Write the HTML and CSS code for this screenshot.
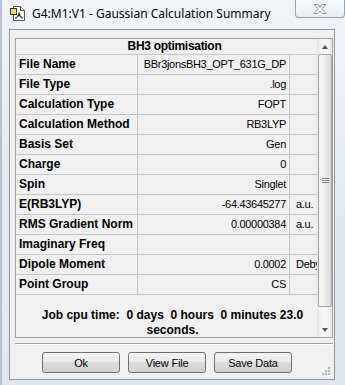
FILE: index.html
```html
<!DOCTYPE html>
<html lang="en">
<head>
    <meta charset="UTF-8">
    <title>Gaussian Calculation Summary</title>
    <link rel="stylesheet" href="styles.css">
</head>
<body>
    <div class="window">
        <div class="titlebar">
            <svg class="app-icon" width="17" height="17" viewBox="0 0 17 17">
                <path d="M3.5 1.5h7l4 4v10h-11z" fill="#fff" stroke="#555"/>
                <path d="M10.5 1.5v4h4" fill="#ddd" stroke="#555"/>
                <rect x="0.5" y="3.5" width="6" height="6" fill="#ffee00" stroke="#333"/>
                <path d="M9 7v3M9 10l-3 3M9 10l3 3" stroke="#444" stroke-width="1.2" fill="none"/>
                <circle cx="9" cy="10" r="1.3" fill="#222"/>
                <circle cx="6" cy="13" r="1.1" fill="#777"/>
                <circle cx="12" cy="13" r="1.1" fill="#777"/>
            </svg>
            <span class="title">G4:M1:V1 - Gaussian Calculation Summary</span>
            <div class="close">
                <svg width="14" height="10" viewBox="0 0 14 10">
                    <path d="M1 0.5h3.5l2.5 2.6 2.5-2.6h3.5l-4.2 4.5 4.2 4.5h-3.5l-2.5-2.6-2.5 2.6h-3.5l4.2-4.5z" fill="#fff" stroke="#8c96a2"/>
                </svg>
            </div>
        </div>

        <div class="client">
            <div class="grid">
                <div class="sheet">
                    <div class="caption">BH3 optimisation</div>
                    <div class="row"><div class="label">File Name</div><div class="value">BBr3jonsBH3_OPT_631G_DP</div><div class="unit"></div></div>
                    <div class="row"><div class="label">File Type</div><div class="value">.log</div><div class="unit"></div></div>
                    <div class="row"><div class="label">Calculation Type</div><div class="value">FOPT</div><div class="unit"></div></div>
                    <div class="row"><div class="label">Calculation Method</div><div class="value">RB3LYP</div><div class="unit"></div></div>
                    <div class="row"><div class="label">Basis Set</div><div class="value">Gen</div><div class="unit"></div></div>
                    <div class="row"><div class="label">Charge</div><div class="value">0</div><div class="unit"></div></div>
                    <div class="row"><div class="label">Spin</div><div class="value">Singlet</div><div class="unit"></div></div>
                    <div class="row"><div class="label">E(RB3LYP)</div><div class="value">-64.43645277</div><div class="unit">a.u.</div></div>
                    <div class="row"><div class="label">RMS Gradient Norm</div><div class="value">0.00000384</div><div class="unit">a.u.</div></div>
                    <div class="row"><div class="label">Imaginary Freq</div><div class="value"></div><div class="unit"></div></div>
                    <div class="row"><div class="label">Dipole Moment</div><div class="value">0.0002</div><div class="unit">Debye</div></div>
                    <div class="row"><div class="label">Point Group</div><div class="value">CS</div><div class="unit"></div></div>
                    <div class="cpu">Job cpu time:&nbsp; 0 days&nbsp; 0 hours&nbsp; 0 minutes 23.0 seconds.</div>
                </div>
                <div class="scrollbar">
                    <div class="arrow"><span class="tri-up"></span></div>
                    <div class="thumb"><span class="grip-lines"></span></div>
                    <div class="track"></div>
                    <div class="arrow"><span class="tri-down"></span></div>
                </div>
            </div>

            <div class="divider"></div>

            <div class="buttons">
                <button>Ok</button>
                <button>View File</button>
                <button>Save Data</button>
            </div>

            <svg class="size-grip" width="9" height="9" viewBox="0 0 9 9">
                <g fill="#b8b8b8">
                    <rect x="6" y="0" width="2" height="2"/>
                    <rect x="3" y="3" width="2" height="2"/>
                    <rect x="6" y="3" width="2" height="2"/>
                    <rect x="0" y="6" width="2" height="2"/>
                    <rect x="3" y="6" width="2" height="2"/>
                    <rect x="6" y="6" width="2" height="2"/>
                </g>
            </svg>
        </div>
    </div>
</body>
</html>
```

FILE: styles.css
```css
html, body {
    margin: 0;
    padding: 0;
    width: 345px;
    height: 385px;
    overflow: hidden;
    background: #dfe7ef;
}

.window {
    width: 345px;
    height: 385px;
    box-sizing: border-box;
    background: linear-gradient(180deg, #f2f5f8 0%, #e6ebf0 40%, #dfe6ee 100%);
    border-left: 2px solid #b9c4d0;
}

.titlebar {
    height: 29px;
    display: flex;
    align-items: flex-start;
}

.app-icon {
    margin: 5px 0 0 8px;
}

.title {
    margin: 5px 0 0 5px;
    font-family: "Noto Sans", sans-serif;
    font-size: 12px;
    line-height: 17px;
    color: #000;
    white-space: nowrap;
}

.close {
    margin-left: auto;
    width: 50px;
    height: 18px;
    box-sizing: border-box;
    border: 1px solid #9aa4b0;
    border-top: none;
    border-radius: 0 0 4px 4px;
    background: linear-gradient(180deg, #f7f9fb 0%, #e9edf2 100%);
    display: flex;
    align-items: center;
    justify-content: center;
}

.client {
    position: relative;
    margin-left: 7px;
    width: 326px;
    height: 351px;
    box-sizing: border-box;
    border: 1px solid #8d959e;
    background: #f0f0f0;
    font-family: "Liberation Sans", Arial, sans-serif;
}

.grid {
    margin: 8px 0 0 5px;
    width: 318px;
    height: 300px;
    box-sizing: border-box;
    border: 1px solid #a0a0a0;
    display: flex;
}

.sheet {
    width: 301px;
    display: flex;
    flex-direction: column;
}

.caption {
    height: 16px;
    box-sizing: border-box;
    border-bottom: 1px solid #c6c6c6;
    padding-left: 16px;
    text-align: center;
    font-size: 12px;
    font-weight: bold;
    letter-spacing: -0.3px;
    line-height: 15px;
}

.row {
    display: flex;
    height: 20px;
    box-sizing: border-box;
    border-bottom: 1px solid #c6c6c6;
    line-height: 19px;
}

.label {
    width: 122px;
    box-sizing: border-box;
    border-right: 1px solid #c6c6c6;
    padding-left: 3px;
    font-size: 12px;
    font-weight: bold;
    white-space: nowrap;
    overflow: hidden;
}

.value {
    width: 152px;
    box-sizing: border-box;
    border-right: 1px solid #c6c6c6;
    padding-right: 3px;
    text-align: right;
    font-size: 11px;
    letter-spacing: -0.3px;
    white-space: nowrap;
    overflow: hidden;
}

.unit {
    width: 27px;
    padding-left: 6px;
    box-sizing: border-box;
    font-size: 11px;
    letter-spacing: -0.3px;
    white-space: nowrap;
    overflow: hidden;
}

.cpu {
    flex: 1;
    padding: 13px 4px 0 16px;
    text-align: center;
    font-size: 12px;
    font-weight: bold;
    line-height: 15px;
}

.scrollbar {
    width: 15px;
    display: flex;
    flex-direction: column;
    background: linear-gradient(90deg, #e3e3e3 0%, #f4f4f4 30%, #f4f4f4 70%, #e8e8e8 100%);
}

.arrow {
    height: 15px;
    display: flex;
    align-items: center;
    justify-content: center;
}

.tri-up {
    width: 0;
    height: 0;
    border-left: 3.5px solid transparent;
    border-right: 3.5px solid transparent;
    border-bottom: 4px solid #505050;
}

.tri-down {
    width: 0;
    height: 0;
    border-left: 3.5px solid transparent;
    border-right: 3.5px solid transparent;
    border-top: 4px solid #505050;
}

.thumb {
    height: 253px;
    margin: 0 0 0 1px;
    box-sizing: border-box;
    border: 1px solid #a3a3a3;
    border-radius: 2px;
    background: linear-gradient(90deg, #f6f6f6 0%, #ececec 50%, #d9d9d9 100%);
    display: flex;
    align-items: center;
    justify-content: center;
}

.grip-lines {
    width: 7px;
    height: 5px;
    background: repeating-linear-gradient(180deg, #7a7a7a 0, #7a7a7a 1px, #f6f6f6 1px, #f6f6f6 2px);
}

.track {
    flex: 1;
}

.divider {
    margin: 5px 0 0 5px;
    width: 318px;
    border-top: 1px solid #a0a0a0;
    border-bottom: 1px solid #ffffff;
}

.buttons {
    display: flex;
    gap: 8px;
    margin: 7px 0 0 32px;
}

button {
    width: 78px;
    height: 21px;
    padding: 0;
    border: 1px solid #707070;
    border-radius: 3px;
    background: linear-gradient(180deg, #f2f2f2 0%, #ebebeb 45%, #dddddd 50%, #cfcfcf 100%);
    font-family: "Liberation Sans", Arial, sans-serif;
    font-size: 11px;
    letter-spacing: -0.2px;
    color: #000;
}

.size-grip {
    position: absolute;
    right: 3px;
    bottom: 3px;
}
```
